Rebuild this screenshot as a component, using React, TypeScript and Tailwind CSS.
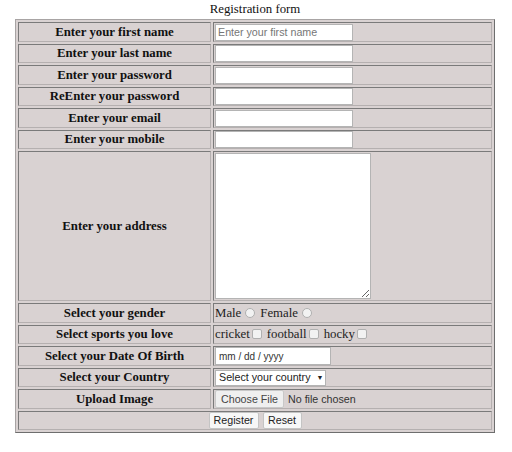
import React from 'react'

const serif = "font-['Liberation_Serif','Times_New_Roman',serif]"
const sans = "font-['Liberation_Sans',Arial,sans-serif]"

const cell = 'border border-t-[#7a7a7a] border-l-[#7a7a7a] border-b-[#b5b0b0] border-r-[#b5b0b0] px-[1px] py-0 align-middle leading-[15px]'
const label = `${cell} text-center font-bold text-[12.8px] text-[#111]`
const field = 'block w-[138px] h-[17px] border border-[#b4b4b4] bg-white px-[2px] text-[10.7px] leading-[15px] text-[#222] outline-none placeholder:text-[#767676]'

const TEXT_ROWS = [
  { label: 'Enter your first name', placeholder: 'Enter your first name', type: 'text', h: 'h-[20px]' },
  { label: 'Enter your last name', placeholder: '', type: 'text', h: 'h-[19px]' },
  { label: 'Enter your password', placeholder: '', type: 'password', h: 'h-[20px]' },
  { label: 'ReEnter your password', placeholder: '', type: 'password', h: 'h-[19px]' },
  { label: 'Enter your email', placeholder: '', type: 'email', h: 'h-[20px]' },
  { label: 'Enter your mobile', placeholder: '', type: 'text', h: 'h-[19px]' },
]

function Radio() {
  return <span className="inline-block w-[10px] h-[10px] ml-[4px] mr-[5px] align-[-1px] rounded-full border border-[#b0b0b0] bg-[#f2f2f2]" />
}

function Check() {
  return <span className="inline-block w-[10px] h-[10px] ml-[2px] mr-[5px] align-[-1px] rounded-[2px] border border-[#b0b0b0] bg-[#f2f2f2]" />
}

export default function App() {
  return (
    <div className="w-[512px] h-[452px] bg-white">
      <table className={`ml-[15px] w-[480px] table-fixed border-separate border-spacing-[2px] border border-t-[#a8a4a4] border-l-[#a8a4a4] border-b-[#6e6e6e] border-r-[#6e6e6e] bg-[#d9d2d2] ${serif}`}>
        <caption className="h-[19px] leading-[19px] text-[12.8px] text-[#111] bg-white">Registration form</caption>
        <tbody>
          {TEXT_ROWS.map(r => (
            <tr key={r.label}>
              <td className={`${label} ${r.h} w-[193px]`}>{r.label}</td>
              <td className={`${cell} ${r.h} w-[279px]`}>
                <input type={r.type} placeholder={r.placeholder} className={`${field} ${sans}`} />
              </td>
            </tr>
          ))}

          <tr>
            <td className={`${label} h-[150px]`}>Enter your address</td>
            <td className={`${cell} h-[150px]`}>
              <textarea className="block w-[156px] h-[146px] border border-[#b4b4b4] bg-white outline-none resize" />
            </td>
          </tr>

          <tr>
            <td className={`${label} h-[20px]`}>Select your gender</td>
            <td className={`${cell} h-[20px] text-[12.8px] text-[#222]`}>
              Male<Radio />Female<Radio />
            </td>
          </tr>

          <tr>
            <td className={`${label} h-[19px]`}>Select sports you love</td>
            <td className={`${cell} h-[19px] text-[12.8px] text-[#222]`}>
              cricket<Check />football<Check />hocky<Check />
            </td>
          </tr>

          <tr>
            <td className={`${label} h-[20px]`}>Select your Date Of Birth</td>
            <td className={`${cell} h-[20px]`}>
              <div className={`flex items-center w-[116px] h-[18px] border border-[#b4b4b4] bg-white pl-[3px] text-[10px] text-[#333] whitespace-pre ${sans}`}>
                mm / dd / yyyy
              </div>
            </td>
          </tr>

          <tr>
            <td className={`${label} h-[19px]`}>Select your Country</td>
            <td className={`${cell} h-[19px]`}>
              <div className={`flex items-center w-[111px] h-[16px] border border-[#b4b4b4] bg-white pl-[3px] text-[10.7px] text-[#222] ${sans}`}>
                Select your country
                <span className="ml-[6px] text-[7px]">▼</span>
              </div>
            </td>
          </tr>

          <tr>
            <td className={`${label} h-[20px]`}>Upload Image</td>
            <td className={`${cell} h-[20px]`}>
              <div className={`flex items-center text-[10.7px] ${sans}`}>
                <button className="w-[69px] h-[18px] border border-[#c8c8c8] bg-[#efefef] text-[#444] rounded-[2px]">
                  Choose File
                </button>
                <span className="ml-[4px] text-[#333]">No file chosen</span>
              </div>
            </td>
          </tr>

          <tr>
            <td colSpan={2} className={`${cell} h-[19px]`}>
              <div className={`flex justify-center gap-[4px] text-[10.7px] text-[#222] ${sans}`}>
                <button className="w-[50px] h-[17px] border border-[#c4c4c4] bg-[#f7f7f7] rounded-[2px]">Register</button>
                <button className="w-[39px] h-[17px] border border-[#c4c4c4] bg-[#f7f7f7] rounded-[2px]">Reset</button>
              </div>
            </td>
          </tr>
        </tbody>
      </table>
    </div>
  )
}
